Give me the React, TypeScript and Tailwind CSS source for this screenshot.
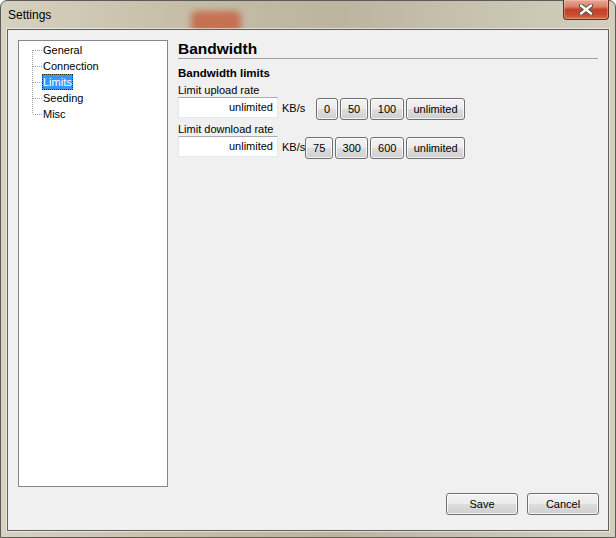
import React from "react";

const font = { fontFamily: '"Liberation Sans", Arial, sans-serif' };

const pages = ["General", "Connection", "Limits", "Seeding", "Misc"];

function WinButton({ label, w }: { label: string; w: string }) {
  return (
    <div
      className={`${w} h-[22px] shrink-0 rounded-[3px] border border-[#707070] bg-[linear-gradient(#f2f2f2_0%,#ebebeb_50%,#dddddd_51%,#cfcfcf_100%)] shadow-[inset_0_0_0_1px_rgba(255,255,255,0.75)] flex items-center justify-center text-[11px] text-black`}
    >
      {label}
    </div>
  );
}

function RateRow({ presets }: { presets: { label: string; w: string }[] }) {
  return (
    <div className="flex w-[287px] items-start">
      <div className="w-[100px] h-[21px] shrink-0 bg-white border border-[#e3e9ef] border-t-[#abadb3] flex items-center justify-end pr-[4px] text-[11px] text-black">
        unlimited
      </div>
      <div className="ml-[4px] mt-[1px] h-[21px] leading-[21px] text-[11px] text-black">KB/s</div>
      <div className="flex-1 flex justify-end gap-[2px] mt-[1px]">
        {presets.map((p) => (
          <WinButton key={p.label} label={p.label} w={p.w} />
        ))}
      </div>
    </div>
  );
}

function TreeLines() {
  const rows = [8, 24, 40, 56, 72];
  return (
    <svg width="10" height="80" className="shrink-0">
      <line x1="0.5" y1="8" x2="0.5" y2="72" stroke="#a0a0a0" strokeDasharray="1 1" />
      {rows.map((y) => (
        <line key={y} x1="1" y1={y + 0.5} x2="10" y2={y + 0.5} stroke="#a0a0a0" strokeDasharray="1 1" />
      ))}
    </svg>
  );
}

export default function App() {
  return (
    <div style={font} className="w-[616px] h-[538px] overflow-hidden">
      <div className="relative w-[616px] h-[538px] flex flex-col rounded-t-[7px] border border-[#5b5b5b] bg-[linear-gradient(90deg,#d7d1c0_0%,#c6bea8_28%,#bcb49f_55%,#c9c3b1_80%,#d4cebd_100%)]">
        {/* blurred window behind the glass */}
        <div className="absolute left-[190px] top-[10px] w-[50px] h-[22px] rounded-[6px] bg-[#c5603e] blur-[3px] opacity-80" />
        <div className="relative h-[28px] flex items-start justify-between pl-[7px] pr-[6px]">
          <div className="mt-[6px] text-[12px] leading-[16px] text-black">Settings</div>
          <div className="-mt-px w-[46px] h-[20px] rounded-b-[4px] border border-t-0 border-[#6a2a1c] bg-[linear-gradient(#e9a796_0%,#d9826a_35%,#c4412a_50%,#c84a30_75%,#d86a48_100%)] shadow-[inset_0_0_0_1px_rgba(255,220,200,0.35)] flex items-center justify-center">
            <svg width="14" height="11" viewBox="0 0 14 11">
              <path d="M2 1.5 L12 9.5 M12 1.5 L2 9.5" stroke="#4a4a4a" strokeWidth="4.2" strokeLinecap="round" />
              <path d="M2 1.5 L12 9.5 M12 1.5 L2 9.5" stroke="#ffffff" strokeWidth="2.4" strokeLinecap="round" />
            </svg>
          </div>
        </div>
        <div className="relative mx-[6px] h-[502px] border border-[#5d5d5d] bg-[#f0f0f0] shadow-[0_0_0_1px_rgba(255,255,255,0.55)] flex flex-col">
          <div className="flex h-[457px] pt-[10px] px-[10px]">
            <div className="w-[150px] h-[447px] shrink-0 bg-white border border-[#828790] flex pt-[1px] pl-[13px]">
              <TreeLines />
              <div className="flex flex-col">
                {pages.map((p) => (
                  <div key={p} className="h-[16px] flex items-center">
                    <span
                      className={
                        p === "Limits"
                          ? "px-[1px] h-[16px] leading-[16px] text-[11px] bg-[#3399ff] text-white outline-1 outline-dotted outline-[#3a2a10] -outline-offset-1"
                          : "px-[1px] h-[16px] leading-[16px] text-[11px] text-black"
                      }
                    >
                      {p}
                    </span>
                  </div>
                ))}
              </div>
            </div>
            <div className="flex-1 ml-[10px] flex flex-col">
              <div className="h-[19px] leading-[18px] text-[15.5px] font-bold text-black border-b border-[#a0a0a0]">
                Bandwidth
              </div>
              <div className="mt-[7px] h-[14px] leading-[14px] text-[11.5px] font-bold text-black">
                Bandwidth limits
              </div>
              <div className="mt-[4px] h-[13px] leading-[13px] text-[11px] text-black">Limit upload rate</div>
              <RateRow
                presets={[
                  { label: "0", w: "w-[22px]" },
                  { label: "50", w: "w-[28px]" },
                  { label: "100", w: "w-[34px]" },
                  { label: "unlimited", w: "w-[59px]" },
                ]}
              />
              <div className="mt-[3px] h-[13px] leading-[13px] text-[11px] text-black">Limit download rate</div>
              <RateRow
                presets={[
                  { label: "75", w: "w-[28px]" },
                  { label: "300", w: "w-[33px]" },
                  { label: "600", w: "w-[34px]" },
                  { label: "unlimited", w: "w-[59px]" },
                ]}
              />
            </div>
          </div>
          <div className="mt-[6px] flex justify-end gap-[9px] pr-[9px]">
            <WinButton label="Save" w="w-[72px]" />
            <WinButton label="Cancel" w="w-[72px]" />
          </div>
        </div>
      </div>
    </div>
  );
}
